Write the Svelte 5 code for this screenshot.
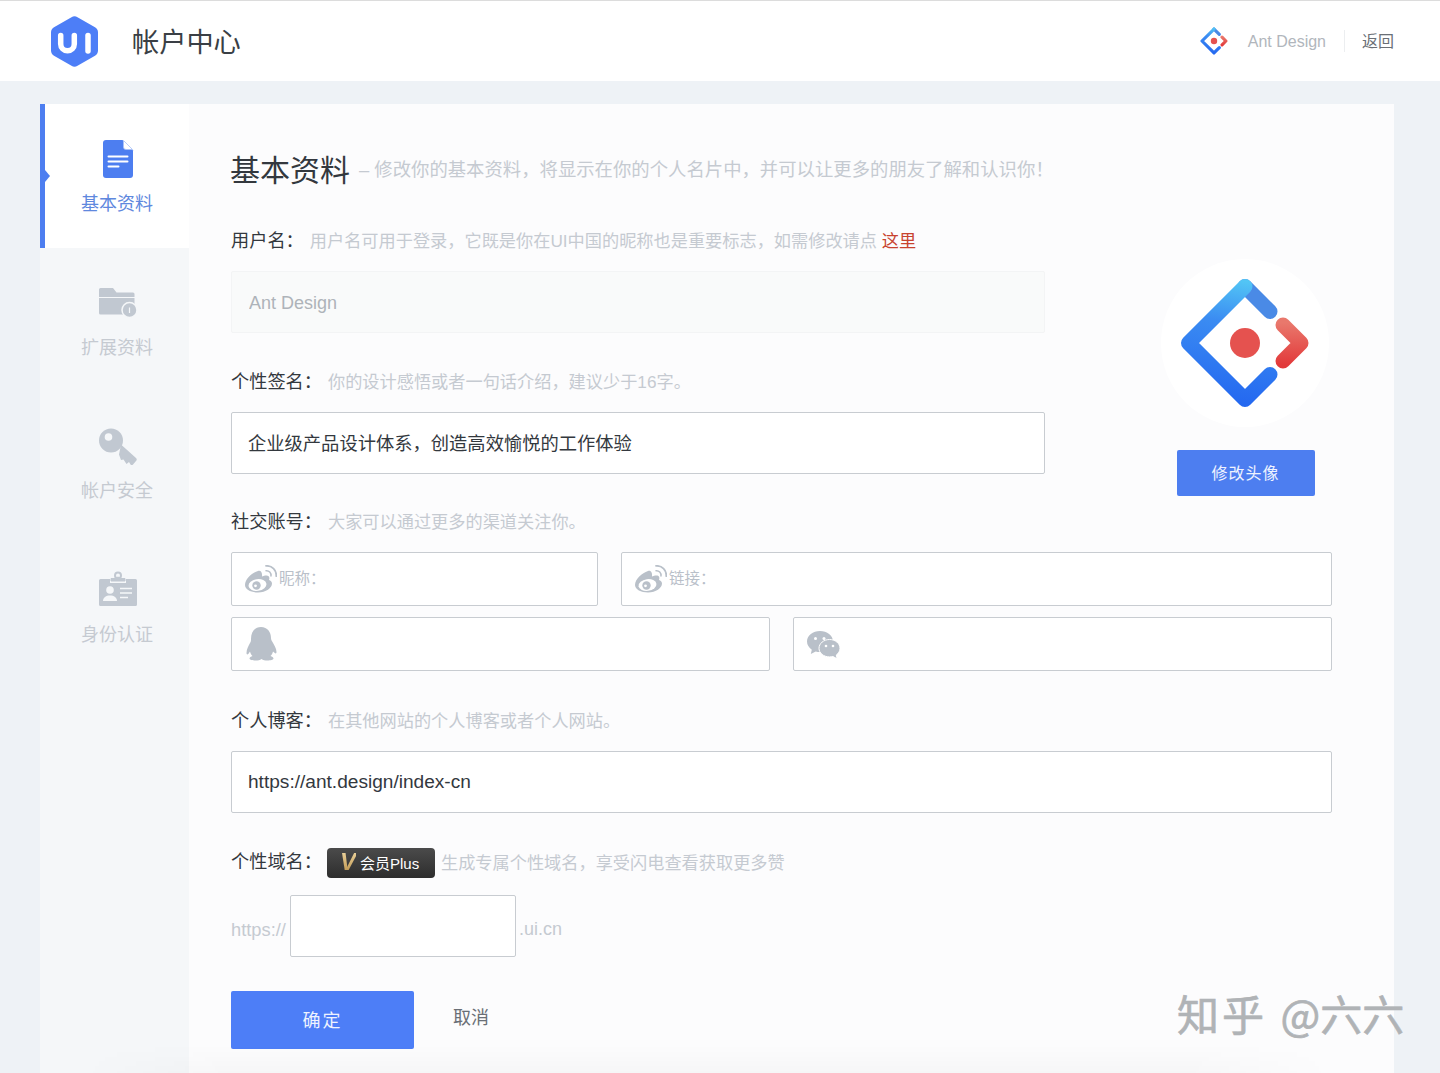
<script lang="ts">
  const navItems = [
    { key: "base", label: "基本资料" },
    { key: "extra", label: "扩展资料" },
    { key: "safe", label: "帐户安全" },
    { key: "id", label: "身份认证" },
  ];
  let active = $state("base");

  let nickname = $state("Ant Design");
  let signature = $state("企业级产品设计体系，创造高效愉悦的工作体验");
  let blog = $state("https://ant.design/index-cn");
  let domain = $state("");
</script>

{#snippet antLogo(cls: string, id: string)}
  <svg class={cls} viewBox="-66 -66 132 132" fill="none" stroke-width="15" stroke-linecap="round" stroke-linejoin="round">
    <defs>
      <linearGradient id="{id}-b" gradientUnits="userSpaceOnUse" x1="10" y1="-60" x2="-10" y2="60">
        <stop offset="0" stop-color="#52c5f5" />
        <stop offset="0.35" stop-color="#3b8cf2" />
        <stop offset="1" stop-color="#2468f0" />
      </linearGradient>
      <linearGradient id="{id}-r" gradientUnits="userSpaceOnUse" x1="40" y1="-20" x2="40" y2="22">
        <stop offset="0" stop-color="#e9786c" />
        <stop offset="1" stop-color="#e2393a" />
      </linearGradient>
    </defs>
    <path d="M25 -31.5 L0 -56.5" stroke="#4a8ae6" />
    <path d="M0 -56.5 L-56.5 0 L0 56.5 L25 31.5" stroke="url(#{id}-b)" />
    <path d="M38 -18 L56 0 L38 18" stroke="url(#{id}-r)" />
    <circle r="15" fill="#e5524f" />
  </svg>
{/snippet}

{#snippet weibo()}
  <svg class="ico-weibo" viewBox="0 0 32 28" fill="none">
    <path d="M13 6C7 8 0 14 0 20c0 4.500 6 7.500 13 7.500 8 0 14-4.500 14-9 0-2-1.500-3-3-3.500 1-2.500 0-4.500-2.500-4.500-1.500 0-3.500 .5-4.500 1 .5-3.500-1-6.500-4-5.500z" fill="#b9c0c9" />
    <ellipse cx="12.500" cy="20" rx="9" ry="5.800" transform="rotate(-8 12.500 20)" fill="#fff" />
    <circle cx="11.500" cy="20.500" r="4.200" fill="#b9c0c9" />
    <circle cx="10.500" cy="20.800" r="1.400" fill="#fff" />
    <path d="M21 5.800c3-.3 5.300 2 5 5.200" stroke="#b9c0c9" stroke-width="1.500" stroke-linecap="round" />
    <path d="M21 .9c6-.5 10.800 4.300 10.200 10.300" stroke="#b9c0c9" stroke-width="1.800" stroke-linecap="round" />
  </svg>
{/snippet}

<div class="page">
  <header class="topbar">
    <div class="brand">
      <svg class="logo" viewBox="0 0 47 51">
        <path d="M20.500 1.200a6 6 0 0 1 6 0l17.500 10a6 6 0 0 1 3 5.200v18.200a6 6 0 0 1-3 5.200l-17.500 10a6 6 0 0 1-6 0L3 39.800a6 6 0 0 1-3-5.200V16.400a6 6 0 0 1 3-5.200z" fill="#4d7ef7" />
        <path d="M9.700 19.500v8.500a6.800 6.800 0 0 0 13.600 0V19.500" fill="none" stroke="#fff" stroke-width="5.500" stroke-linecap="round" />
        <path d="M37 19.500V35" fill="none" stroke="#fff" stroke-width="5.500" stroke-linecap="round" />
      </svg>
      <span class="brand-title">帐户中心</span>
    </div>
    <div class="top-right">
      {@render antLogo("ant-small", "ant-s")}
      <span class="top-name">Ant Design</span>
      <i class="top-sep"></i>
      <a class="top-back" href="#back">返回</a>
    </div>
  </header>

  <div class="content">
    <div class="card">
      <nav class="side">
        {#each navItems as item (item.key)}
          <button class="nav-item" class:active={active === item.key} onclick={() => (active = item.key)}>
            {#if item.key === "base"}
              <svg class="nav-ico" viewBox="-4 0 38 38">
                <path d="M3 0h16.500L30 10.500V35a3 3 0 0 1-3 3H3a3 3 0 0 1-3-3V3a3 3 0 0 1 3-3z" fill="#4d7ef0" />
                <path d="M20.500 0.500L29.500 9.500H23a2.500 2.500 0 0 1-2.500-2.500z" fill="#fff" stroke="#a9c2f7" stroke-width="0.800" />
                <path d="M5.500 16.500h19M5.500 21.500h19M5.500 26.500h10" stroke="#fff" stroke-width="2" stroke-linecap="round" />
              </svg>
            {:else if item.key === "extra"}
              <svg class="nav-ico" viewBox="0 0 38 30">
                <path d="M1.500 0h12.500l3.500 4.500h16.500a1.500 1.500 0 0 1 1.500 1.500v3H0V1.500A1.500 1.500 0 0 1 1.500 0z" fill="#c1c8d1" />
                <path d="M0 10h35.500v16.500H1.500A1.500 1.500 0 0 1 0 25z" fill="#c1c8d1" />
                <circle cx="30.500" cy="22" r="7.500" fill="#c1c8d1" stroke="#f5f7f9" stroke-width="1.500" />
                <path d="M30.500 19.500v5.500" stroke="#f5f7f9" stroke-width="1.200" />
              </svg>
            {:else if item.key === "safe"}
              <svg class="nav-ico" viewBox="0 0 38 37">
                <circle cx="12" cy="12" r="12" fill="#c1c8d1" />
                <circle cx="9.500" cy="8.500" r="3.800" fill="#f5f7f9" />
                <path d="M22 16L37 29.500q1.500 1.500 0 3L34 36q-1 1-2.500 0L30 33.500l-2.500 2L24.500 31 22 31.500 20 26z" fill="#c1c8d1" />
              </svg>
            {:else}
              <svg class="nav-ico" viewBox="0 1 38 34">
                <path d="M12 9V6.500h4.500a3 3 0 0 1 5 0H26V9z" fill="#c1c8d1" stroke="#c1c8d1" stroke-width="1" stroke-linejoin="round" />
                <circle cx="19" cy="3.500" r="3" fill="none" stroke="#c1c8d1" stroke-width="2" />
                <path d="M1.500 7H11v4h16V7h9.500A1.500 1.500 0 0 1 38 8.500V32.500a1.500 1.500 0 0 1-1.500 1.500H1.500A1.500 1.500 0 0 1 0 32.500V8.500A1.500 1.500 0 0 1 1.500 7z" fill="#c1c8d1" />
                <circle cx="11" cy="18" r="3.800" fill="#f5f7f9" />
                <path d="M4 29c0-3.500 3-5.500 7-5.500s7 2 7 5.500z" fill="#f5f7f9" />
                <path d="M21 16.500h12M21 21h12M21 25.500h8" stroke="#f5f7f9" stroke-width="1.600" />
              </svg>
            {/if}
            <span>{item.label}</span>
          </button>
        {/each}
      </nav>

      <main class="main">
        <div class="heading">
          <h1>基本资料</h1>
          <span>– 修改你的基本资料，将显示在你的个人名片中，并可以让更多的朋友了解和认识你！</span>
        </div>

        <div class="top-form">
          <div class="top-fields">
            <div class="field">
              <div class="label-row">
                <label for="nick">用户名：</label>
                <span class="hint">用户名可用于登录，它既是你在UI中国的昵称也是重要标志，如需修改请点 <a href="#here">这里</a></span>
              </div>
              <input id="nick" class="ipt locked" bind:value={nickname} readonly />
            </div>
            <div class="field">
              <div class="label-row">
                <label for="sign">个性签名：</label>
                <span class="hint">你的设计感悟或者一句话介绍，建议少于16字。</span>
              </div>
              <input id="sign" class="ipt" bind:value={signature} />
            </div>
          </div>
          <div class="avatar-col">
            <div class="avatar">{@render antLogo("ant-big", "ant-b")}</div>
            <button class="avatar-btn">修改头像</button>
          </div>
        </div>

        <div class="field social">
          <div class="label-row">
            <span class="label">社交账号：</span>
            <span class="hint">大家可以通过更多的渠道关注你。</span>
          </div>
          <div class="social-row first">
            <div class="social-ipt">
              {@render weibo()}
              <span class="prefix">昵称：</span>
              <input />
            </div>
            <div class="social-ipt">
              {@render weibo()}
              <span class="prefix">链接：</span>
              <input />
            </div>
          </div>
          <div class="social-row second">
            <div class="social-ipt">
              <svg class="ico-qq" viewBox="0 0 32 34">
                <path d="M16 0c6.500 0 10 5 10 11 0 1.500 .5 2.500 1.500 4 1.500 2.500 4 6.500 4 10 0 1.500-.8 1.800-2 .8l-1.500-1.300c-.5 2-1.500 3.500-2.500 4.500 1.500 .5 3 1.300 3 2.500 0 1.200-3 2-6 2-2.500 0-4.500-.5-6-1.500-1.500 1-3.500 1.500-6 1.500-3 0-6-.8-6-2 0-1.200 1.500-2 3-2.500-1-1-2-2.500-2.500-4.500L3.500 26.800c-1.200 1-2 .7-2-.8 0-3.500 2-7.500 3.500-10 1-1.500 1-2.500 1-4C6 5 9.500 0 16 0z" fill="#b9c0c9" />
              </svg>
              <input />
            </div>
            <div class="social-ipt">
              <svg class="ico-wx" viewBox="0 0 33 29">
                <path d="M13 0c7 0 13 4.500 13 10.500 0 6-6 10.500-13 10.500-1.500 0-3-.2-4.300-.6L3.800 23l1-4.300C1.900 16.700 0 13.800 0 10.500 0 4.500 6 0 13 0z" fill="#b9c0c9" />
                <circle cx="8.500" cy="7.500" r="1.500" fill="#fff" />
                <circle cx="17" cy="7.500" r="1.500" fill="#fff" />
                <path d="M22.500 8.500c5.800 0 10.500 3.900 10.500 8.800 0 2.700-1.400 5.100-3.700 6.700l.8 3.800-4.200-2.300c-1 .3-2.200 .4-3.400 .4-5.800 0-10.500-3.800-10.500-8.600s4.700-8.800 10.500-8.800z" fill="#b9c0c9" stroke="#fff" stroke-width="1" />
                <circle cx="19" cy="15" r="1.300" fill="#fff" />
                <circle cx="26" cy="15" r="1.300" fill="#fff" />
              </svg>
              <input />
            </div>
          </div>
        </div>

        <div class="field blog">
          <div class="label-row">
            <label for="blog">个人博客：</label>
            <span class="hint">在其他网站的个人博客或者个人网站。</span>
          </div>
          <input id="blog" class="ipt url" bind:value={blog} />
        </div>

        <div class="field domain">
          <div class="label-row">
            <label for="domain">个性域名：</label>
            <span class="vip"><b>V</b>会员Plus</span>
            <span class="hint">生成专属个性域名，享受闪电查看获取更多赞</span>
          </div>
          <div class="domain-row">
            <span>https://</span>
            <input id="domain" class="ipt" bind:value={domain} />
            <span class="tld">.ui.cn</span>
          </div>
        </div>

        <div class="actions">
          <button class="primary">确定</button>
          <button class="ghost">取消</button>
        </div>
      </main>
    </div>
  </div>

  <div class="watermark"><span>知乎</span> @六六</div>
</div>

<style>
  :global(body) {
    margin: 0;
    background: #eef2f6;
  }

  .page {
    position: relative;
    height: 1073px;
    overflow: hidden;
    font-family: "Liberation Sans", "Noto Sans CJK SC", sans-serif;
    color: #33383e;
    font-size: 18px;
  }

  /* header */
  .topbar {
    height: 80px;
    border-top: 1px solid #dcdcdc;
    background: #fff;
    display: flex;
    align-items: center;
    justify-content: space-between;
    padding: 0 46px 0 51px;
  }
  .brand { display: flex; align-items: center; gap: 34px; }
  .logo { width: 47px; height: 51px; display: block; }
  .brand-title { font-size: 27.200px; color: #3a3f45; margin-bottom: 2px; }
  .top-right { display: flex; align-items: center; font-size: 16px; }
  .ant-small { width: 28px; height: 28px; margin-right: 20px; }
  .top-name { color: #b1b6bc; padding-top: 2px; }
  .top-sep { width: 1px; height: 22px; background: #eceef0; margin: 0 17px 0 18px; }
  .top-back { color: #6a6f76; text-decoration: none; font-size: 16px; margin-bottom: 2px; }

  /* shell */
  .content { padding: 23px 46px 0 40px; }
  .card { position: relative; display: flex; align-items: stretch; height: 969px; background: #fcfcfd; }
  .card::after {
    content: "";
    position: absolute;
    left: 40px;
    right: 60px;
    bottom: 0;
    height: 28px;
    background: linear-gradient(rgba(0, 0, 0, 0), rgba(0, 0, 0, 0.025));
    -webkit-mask-image: linear-gradient(to right, transparent, #000 12%, #000 88%, transparent);
    mask-image: linear-gradient(to right, transparent, #000 12%, #000 88%, transparent);
    pointer-events: none;
  }

  .side { width: 149px; flex: none; background: #f5f7f9; }
  .nav-item {
    position: relative;
    box-sizing: border-box;
    width: 100%;
    height: 143.500px;
    border: 0;
    background: none;
    padding: 36px 0 0 6px;
    display: flex;
    flex-direction: column;
    align-items: center;
    font: inherit;
    font-size: 18px;
    color: #c5cad1;
    cursor: pointer;
  }
  .nav-item span { position: absolute; top: 86.800px; left: 5px; right: 0; line-height: 26px; }
  .nav-item.active { height: 144px; background: #fff; color: #5f88de; box-shadow: inset 5px 0 0 #4d7ef0; }
  .nav-item.active::before {
    content: "";
    position: absolute;
    left: 5px;
    top: 66px;
    border-left: 5px solid #4d7ef0;
    border-top: 6px solid transparent;
    border-bottom: 6px solid transparent;
  }
  .nav-ico { display: block; height: 38px; width: 38px; }

  .main { flex: 1; min-width: 0; padding: 43px 62px 0 42px; }

  .heading { display: flex; align-items: center; height: 42px; }
  .heading h1 { margin: 0 0 0 -1px; font-size: 30px; font-weight: 400; color: #33383e; }
  .heading span { margin-left: 9px; color: #c5cad1; font-size: 18.380px; white-space: nowrap; }

  .top-form { display: flex; justify-content: space-between; margin-top: 39px; }
  .top-fields { width: 814px; }

  .field { margin-top: 36px; }
  .field.social { margin-top: 35px; }
  .field.blog { margin-top: 37px; }
  .top-fields .field:first-child { margin-top: 0; }

  .label-row {
    box-sizing: border-box;
    display: flex;
    align-items: center;
    height: 24px;
    padding-bottom: 2px;
    margin-bottom: 19px;
    white-space: nowrap;
  }
  .label-row label, .label { font-size: 18.200px; color: #33383e; }
  .hint { font-size: 17.200px; color: #c5cad1; margin-left: 6px; }
  .hint a { color: #c8432f; text-decoration: none; }

  .ipt {
    display: block;
    box-sizing: border-box;
    width: 100%;
    height: 62px;
    padding: 0 16px 2px;
    border: 1px solid #c8ccd1;
    border-radius: 2px;
    background: #fff;
    font: inherit;
    font-size: 18.300px;
    color: #33383e;
    outline: none;
  }
  .ipt.url { font-size: 19.100px; padding: 0 16px; }
  .ipt.locked { background: #f9fafa; border-color: #f3f4f5; color: #aeb3b9; padding: 2px 17px 0; font-size: 18px; }

  .avatar-col {
    width: 173px;
    margin-top: 31px;
    margin-bottom: -32px;
    display: flex;
    flex-direction: column;
    align-items: center;
  }
  .avatar {
    width: 168px;
    height: 168px;
    margin-right: 1px;
    border-radius: 50%;
    background: #fff;
    display: flex;
    align-items: center;
    justify-content: center;
  }
  .ant-big { width: 132px; height: 132px; }
  .avatar-btn {
    width: 138px;
    height: 46px;
    margin-top: 23px;
    padding: 0 0 2px;
    border: 0;
    border-radius: 2px;
    background: #4d7ef0;
    color: #eef3ff;
    font: inherit;
    font-size: 16px;
    letter-spacing: 1px;
  }

  .social-row { display: grid; gap: 23px; }
  .social-row.first { grid-template-columns: 367px 711px; }
  .social-row.second { grid-template-columns: 539px 539px; margin-top: 11px; }
  .social-ipt {
    box-sizing: border-box;
    height: 54px;
    display: flex;
    align-items: center;
    padding-left: 13px;
    border: 1px solid #c8ccd1;
    border-radius: 2px;
    background: #fff;
  }
  .social-ipt input { flex: 1; min-width: 0; border: 0; outline: none; height: 100%; background: none; font: inherit; }
  .prefix { font-size: 15.500px; color: #b9c0c9; margin-left: 2px; margin-bottom: 5px; }
  .ico-weibo { width: 32px; height: 28px; flex: none; }
  .ico-qq { width: 32px; height: 34px; flex: none; }
  .ico-wx { width: 33px; height: 29px; flex: none; margin-top: 2px; }

  .domain .label-row { margin-bottom: 22px; padding-bottom: 0; }
  .domain .label-row label { margin-bottom: 2px; }
  .vip {
    box-sizing: border-box;
    height: 30px;
    width: 108px;
    margin-left: 5px;
    margin-top: 4px;
    flex: none;
    display: flex;
    align-items: center;
    padding: 0 0 2px 13px;
    border-radius: 4px;
    background: linear-gradient(#4b4b4b, #2d2d2d);
    color: #fff;
    font-size: 15px;
  }
  .vip b {
    font-style: italic;
    font-size: 24px;
    line-height: 24px;
    background: linear-gradient(#f0d9a4, #b98f48);
    -webkit-background-clip: text;
    background-clip: text;
    color: transparent;
    margin-right: 4px;
  }
  .domain-row { display: flex; align-items: center; gap: 4px; color: #c5cad1; font-size: 18.300px; }
  .domain-row span { padding-top: 7px; }
  .domain-row .tld { font-size: 18px; margin-left: -1px; }
  .domain-row .ipt { width: 226px; }

  .actions { display: flex; margin-top: 34px; }
  .primary {
    width: 183px;
    height: 58px;
    padding: 0 0 2px;
    border: 0;
    border-radius: 2px;
    background: #4d7ef7;
    color: #eef3ff;
    font: inherit;
    font-size: 18px;
    letter-spacing: 2px;
  }
  .ghost {
    margin-left: 39px;
    height: 50px;
    border: 0;
    padding: 0;
    background: none;
    color: #6a6f76;
    font: inherit;
    font-size: 18px;
  }

  .watermark {
    position: absolute;
    left: 1177px;
    top: 983px;
    font-family: "Noto Sans CJK SC", sans-serif;
    font-size: 42px;
    line-height: 60px;
    color: #b0b3b6;
    -webkit-text-stroke: 0.7px #b0b3b6;
    white-space: nowrap;
    word-spacing: 4px;
  }
  .watermark span { letter-spacing: 3px; }
</style>
